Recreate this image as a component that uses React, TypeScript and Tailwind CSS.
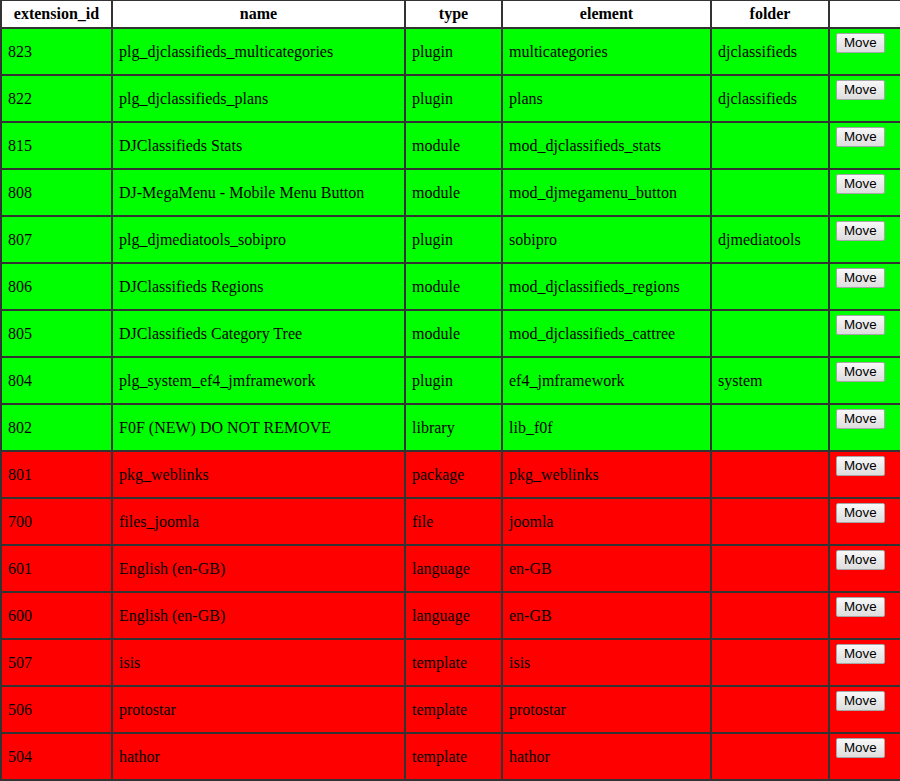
import React from 'react';

type Ext = {
    id: number;
    name: string;
    type: string;
    element: string;
    folder: string;
    ok: boolean;
};

const rows: Ext[] = [
    {id: 823, name: 'plg_djclassifieds_multicategories', type: 'plugin', element: 'multicategories', folder: 'djclassifieds', ok: true},
    {id: 822, name: 'plg_djclassifieds_plans', type: 'plugin', element: 'plans', folder: 'djclassifieds', ok: true},
    {id: 815, name: 'DJClassifieds Stats', type: 'module', element: 'mod_djclassifieds_stats', folder: '', ok: true},
    {id: 808, name: 'DJ-MegaMenu - Mobile Menu Button', type: 'module', element: 'mod_djmegamenu_button', folder: '', ok: true},
    {id: 807, name: 'plg_djmediatools_sobipro', type: 'plugin', element: 'sobipro', folder: 'djmediatools', ok: true},
    {id: 806, name: 'DJClassifieds Regions', type: 'module', element: 'mod_djclassifieds_regions', folder: '', ok: true},
    {id: 805, name: 'DJClassifieds Category Tree', type: 'module', element: 'mod_djclassifieds_cattree', folder: '', ok: true},
    {id: 804, name: 'plg_system_ef4_jmframework', type: 'plugin', element: 'ef4_jmframework', folder: 'system', ok: true},
    {id: 802, name: 'F0F (NEW) DO NOT REMOVE', type: 'library', element: 'lib_f0f', folder: '', ok: true},
    {id: 801, name: 'pkg_weblinks', type: 'package', element: 'pkg_weblinks', folder: '', ok: false},
    {id: 700, name: 'files_joomla', type: 'file', element: 'joomla', folder: '', ok: false},
    {id: 601, name: 'English (en-GB)', type: 'language', element: 'en-GB', folder: '', ok: false},
    {id: 600, name: 'English (en-GB)', type: 'language', element: 'en-GB', folder: '', ok: false},
    {id: 507, name: 'isis', type: 'template', element: 'isis', folder: '', ok: false},
    {id: 506, name: 'protostar', type: 'template', element: 'protostar', folder: '', ok: false},
    {id: 504, name: 'hathor', type: 'template', element: 'hathor', folder: '', ok: false},
];

const headers = ['extension_id', 'name', 'type', 'element', 'folder', ''];

function App() {
    const td = 'border-2 border-[#333] px-[6px] align-middle';

    return (
        <div className="w-[900px] h-[781px] overflow-hidden font-['Liberation_Serif',serif] text-[16px] text-black bg-white">
            <table className="-mt-px w-[900px] table-fixed border-collapse">
                <colgroup>
                    <col className="w-[111px]"/>
                    <col className="w-[293px]"/>
                    <col className="w-[97px]"/>
                    <col className="w-[209px]"/>
                    <col className="w-[118px]"/>
                    <col className="w-[72px]"/>
                </colgroup>
                <thead>
                {/* Header */}
                <tr className="h-[28px] bg-white">
                    {headers.map((h, idx) => (
                        <th key={idx} className="border-2 border-[#333] px-[6px] text-center font-bold">
                            {h}
                        </th>
                    ))}
                </tr>
                </thead>
                <tbody>
                {rows.map((r) => (
                    <tr key={r.id} className={`h-[47px] ${r.ok ? 'bg-[#00ff00]' : 'bg-[#ff0000]'}`}>
                        <td className={td}>{r.id}</td>
                        <td className={td}>{r.name}</td>
                        <td className={td}>{r.type}</td>
                        <td className={td}>{r.element}</td>
                        <td className={td}>{r.folder}</td>
                        <td className="border-2 border-[#333] px-[6px] pt-[4px] align-top">
                            <button
                                className="block h-[20px] px-[7px] rounded-[2px] border border-[#a6a6a6] bg-gradient-to-b from-[#f8f8f8] to-[#dddddd] font-['Liberation_Sans',Arial,sans-serif] text-[13.33px] leading-none text-black">
                                Move
                            </button>
                        </td>
                    </tr>
                ))}
                </tbody>
            </table>
        </div>
    );
}

export default App;
